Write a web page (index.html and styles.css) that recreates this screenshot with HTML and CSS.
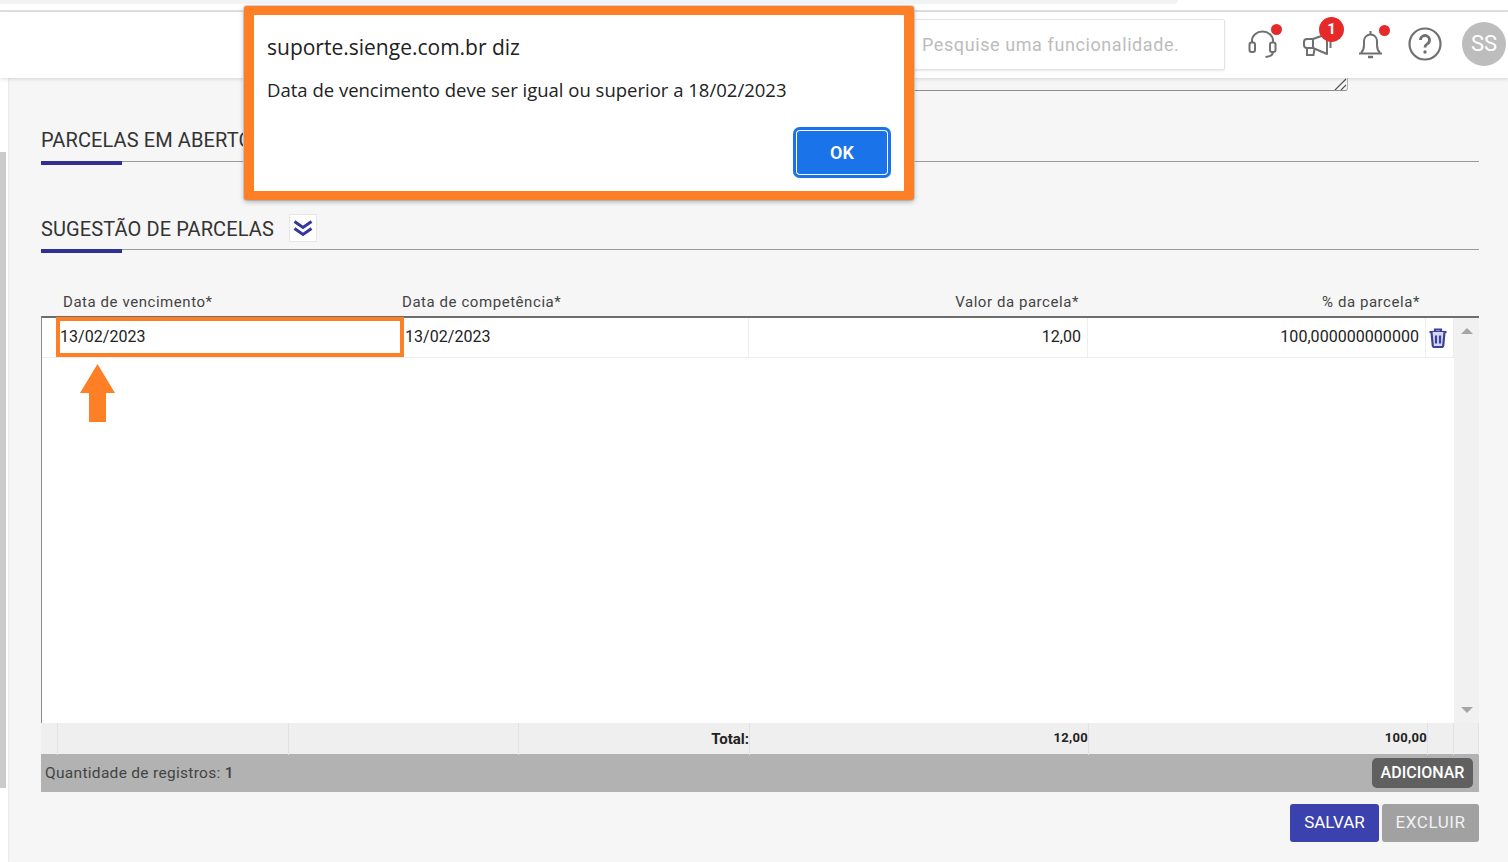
FILE: index.html
```html
<!DOCTYPE html>
<html lang="pt-BR">
<head>
<meta charset="utf-8">
<title>Sienge</title>
<link rel="stylesheet" href="styles.css">
</head>
<body>
<div class="page">
  <div class="topstrip"><div class="tab-edge"></div></div>
  <header class="header">
    <div class="search">Pesquise uma funcionalidade.</div>
    <div class="icons">
      <div class="icon ic-head">
        <svg width="32" height="30" viewBox="0 0 32 30" fill="none" stroke="#707070" stroke-width="2"><path d="M4 12v-1.500a10.500 9 0 0 1 21 0V12"/><rect x="1.500" y="12.500" width="5.500" height="9.500" rx="2"/><rect x="22" y="12.500" width="5.500" height="9.500" rx="2"/><path d="M25 22c0 3-3 4.500-7.500 5"/></svg>
        <span class="dot"></span>
      </div>
      <div class="icon ic-mega">
        <svg width="34" height="28" viewBox="0 0 34 28" fill="none" stroke="#707070" stroke-width="2"><path d="M10 8H4a3 3 0 0 0-3 3v3a3 3 0 0 0 3 3h6z"/><path d="M10 8 24 3v20L10 17" stroke-linejoin="round"/><path d="M4 17v7h6.500l1-6"/><path d="M27.500 9v8"/></svg>
        <span class="badge">1</span>
      </div>
      <div class="icon ic-bell">
        <svg width="26" height="30" viewBox="0 0 26 30" fill="none" stroke="#707070" stroke-width="2"><path d="M2 23c2-2 3-4 3-8v-4a6.500 6.500 0 0 1 13 0v4c0 4 1 6 3 8"/><path d="M0 23.500h23"/><path d="M11.500 1v3.500"/><path d="M9 27h5" stroke-width="2.500"/></svg>
        <span class="dot"></span>
      </div>
      <div class="icon ic-help">
        <svg width="34" height="34" viewBox="0 0 34 34" fill="none" stroke="#707070" stroke-width="2.200"><circle cx="17" cy="17" r="15.500"/><path d="M12.500 13a4.500 4.500 0 1 1 6.800 3.900c-1.600 1-2.300 1.800-2.300 3.600" stroke-width="2.800"/><circle cx="17" cy="25" r="1.700" fill="#707070" stroke="none"/></svg>
      </div>
      <div class="avatar">SS</div>
    </div>
  </header>

  <div class="body">
    <aside class="side"><div class="side-bar"></div></aside>
    <main class="content">
      <div class="textarea-rest"><svg class="grip" width="14" height="12" viewBox="0 0 14 12" stroke="#555" stroke-width="1.200"><path d="M2 12 13 1M8 12l5-5"/></svg></div>

      <div class="sec sec-open"><h2 class="sec-title">PARCELAS EM ABERTO</h2></div>

      <div class="sec sec-sug">
        <h2 class="sec-title">SUGESTÃO DE PARCELAS</h2>
        <button class="chev" type="button"><svg width="20" height="18" viewBox="0 0 20 18" fill="none" stroke="#34399a" stroke-width="3"><path d="M1.500 2.500l8.500 6 8.500-6M1.500 9.500l8.500 6 8.500-6"/></svg></button>
      </div>

      <div class="thead">
        <div class="th th-a">Data de vencimento*</div>
        <div class="th th-b">Data de competência*</div>
        <div class="th th-c">Valor da parcela*</div>
        <div class="th th-d">% da parcela*</div>
      </div>

      <div class="tbody">
        <div class="rows">
          <div class="row">
            <div class="td td-gap"></div>
            <div class="td td-hl">13/02/2023</div>
            <div class="td td-date">13/02/2023</div>
            <div class="td td-num">12,00</div>
            <div class="td td-num">100,000000000000</div>
            <div class="td td-act">
              <svg width="18" height="20" viewBox="0 0 18 20" fill="#d5d7ee" stroke="#3b4199" stroke-width="2.200"><path d="M0.500 4h17" fill="none"/><path d="M6 4V1.500h6V4" fill="none"/><path d="M2.500 4l1.300 14a1.500 1.500 0 0 0 1.500 1h7.400a1.500 1.500 0 0 0 1.500-1L15.500 4"/><path d="M7 7.500v8M11 7.500v8" fill="none"/></svg>
            </div>
          </div>
          <svg class="arrow" width="35" height="58" viewBox="0 0 35 58"><path d="M17.500 0 35 29H26V58H9V29H0z" fill="#ff7f27"/></svg>
        </div>
        <div class="scroll">
          <span class="tri-up"></span>
          <span class="tri-down"></span>
        </div>
      </div>

      <div class="tfoot">
        <div class="tf"></div>
        <div class="tf"></div>
        <div class="tf"></div>
        <div class="tf tf-total">Total:</div>
        <div class="tf tf-sum">12,00</div>
        <div class="tf tf-sum">100,00</div>
        <div class="tf"></div>
        <div class="tf"></div>
      </div>

      <div class="status">
        <span class="count">Quantidade de registros: <b>1</b></span>
        <button class="btn-add" type="button">ADICIONAR</button>
      </div>

      <div class="actions">
        <button class="btn btn-save" type="button">SALVAR</button>
        <button class="btn btn-del" type="button">EXCLUIR</button>
      </div>
    </main>
  </div>

  <div class="dialog">
    <div class="dlg-title">suporte.sienge.com.br diz</div>
    <div class="dlg-msg">Data de vencimento deve ser igual ou superior a 18/02/2023</div>
    <div class="dlg-foot"><button class="dlg-ok" type="button">OK</button></div>
  </div>
</div>
</body>
</html>
```

FILE: styles.css
```css
* { box-sizing: border-box; }
html, body { margin: 0; padding: 0; }
body { font-family: Roboto, "Liberation Sans", sans-serif; color: #333; background: #fff; }
button { font-family: inherit; border: 0; cursor: pointer; }

.page { position: relative; width: 1508px; height: 862px; overflow: hidden; display: flex; flex-direction: column; }

.topstrip { height: 12px; flex: none; background: #fff; border-bottom: 2px solid #e2e2e2; }
.tab-edge { width: 1178px; height: 4px; background: #f1f3f4; border-bottom-right-radius: 8px; }

.header { height: 66px; flex: none; background: #fff; display: flex; align-items: flex-start; justify-content: flex-end; box-shadow: 0 1px 4px rgba(0,0,0,.14); position: relative; z-index: 2; }
.search { width: 400px; height: 51px; margin-top: 7px; padding: 0 0 0 96px; border: 1px solid #e4e4e4; border-radius: 2px; box-shadow: 0 1px 2px rgba(0,0,0,.1); line-height: 49px; font-size: 18px; color: #bcbcbc; letter-spacing: .59px; background: #fff; white-space: nowrap; }
.icons { width: 283px; height: 66px; position: relative; display: flex; align-items: flex-start; }
.icon { position: relative; flex: none; }
.icon svg { display: block; }
.ic-head { margin: 18px 0 0 23px; width: 32px; }
.ic-mega { margin: 19px 0 0 23px; width: 34px; }
.ic-bell { margin: 18px 0 0 22px; width: 26px; }
.ic-help { margin: 15px 0 0 23px; width: 34px; }
.dot { position: absolute; width: 11px; height: 11px; border-radius: 50%; background: #e62a2a; }
.ic-head .dot { left: 23px; top: -6px; }
.ic-bell .dot { left: 20px; top: -5px; }
.badge { position: absolute; left: 16px; top: -14px; width: 25px; height: 25px; border-radius: 50%; background: #e62a2a; color: #fff; font-size: 15px; font-weight: 700; text-align: center; line-height: 25px; }
.avatar { flex: none; width: 44px; height: 44px; margin: 10px 0 0 20px; border-radius: 50%; background: #bdbdbd; color: #fff; font-size: 22px; text-align: center; line-height: 44px; }

.body { flex: 1; display: flex; min-height: 0; }
.side { width: 8px; flex: none; background: #fff; box-shadow: 1px 0 2px rgba(0,0,0,.06); padding-top: 74px; position: relative; z-index: 1; }
.side-bar { width: 6px; height: 636px; background: #cbcbcb; }
.content { flex: 1; min-width: 0; background: #f6f6f6; padding: 0 29px 0 33px; }

.textarea-rest { position: relative; width: 500px; height: 13px; margin-left: 807px; border-bottom: 1px solid #8d8d8d; border-right: 1px solid #b5b5b5; border-bottom-right-radius: 3px; }
.grip { position: absolute; right: 0; bottom: 0; }

.sec { position: relative; border-bottom: 1px solid #9a9a9a; display: flex; align-items: center; }
.sec::after { content: ""; position: absolute; left: 0; bottom: -4px; width: 81px; height: 4px; background: #2e3192; }
.sec-open { height: 71px; padding-top: 28px; }
.sec-sug { height: 88px; margin-top: 0; padding-top: 47px; }
.sec-title { margin: 0; font-size: 20px; font-weight: 400; color: #333; white-space: nowrap; letter-spacing: .1px; }
.chev { width: 28px; height: 28px; margin-left: 15px; margin-top: -2px; padding: 0; background: #fff; border: 1px solid #e6e6e6; display: flex; align-items: center; justify-content: center; }

.thead { display: grid; grid-template-columns: 361px 345px 339px 334px; height: 66px; padding-top: 42px; font-size: 15px; letter-spacing: .56px; color: #444; line-height: 20px; }
.th-a { padding-left: 22px; }
.th-c { text-align: right; padding-right: 7px; }
.th-d { text-align: right; }

.tbody { display: flex; height: 407px; border-top: 2px solid #6e6e6e; border-left: 1px solid #8d8d8d; background: #fff; }
.rows { position: relative; flex: 1; min-width: 0; }
.row { display: grid; grid-template-columns: 14px 348px 345px 339px 338px 28px; height: 40px; border-bottom: 1px solid #eee; font-size: 16px; color: #222; letter-spacing: .04px; }
.td { line-height: 38px; white-space: nowrap; }
.td-hl { border: 4px solid #ff7f27; margin-top: -1px; line-height: 31px; }
.td-date { padding-left: 1px; border-right: 1px solid #eee; }
.td-num { text-align: right; padding-right: 6px; border-right: 1px solid #eee; }
.td-act { display: flex; align-items: flex-start; padding: 10px 0 0 3px; border-right: 1px solid #eee; }
.td-act svg { display: block; }
.arrow { position: absolute; left: 38px; top: 46px; }
.scroll { position: relative; width: 25px; flex: none; background: #f1f1f1; }
.tri-up, .tri-down { position: absolute; left: 7px; width: 0; height: 0; border-left: 6px solid transparent; border-right: 6px solid transparent; }
.tri-up { top: 10px; border-bottom: 6px solid #a6a6a6; }
.tri-down { bottom: 10px; border-top: 6px solid #a6a6a6; }

.tfoot { display: grid; grid-template-columns: 17px 231px 230px 231px 339px 339px 26px 25px; height: 31px; background: #efefef; font-weight: 700; color: #222; }
.tf { border-right: 1px solid #e2e2e2; text-align: right; line-height: 30px; }
.tf-total { font-size: 15px; line-height: 32px; }
.tf-sum { font-size: 13px; letter-spacing: .3px; }

.status { height: 38px; background: #b2b2b2; display: flex; align-items: center; justify-content: space-between; padding: 0 6px 0 4px; }
.count { font-size: 15.500px; color: #444; letter-spacing: .3px; }
.count b { font-weight: 500; }
.btn-add { width: 101px; height: 30px; padding: 0 0 2px; border-radius: 5px; background: #606060; color: #fff; font-size: 16px; font-weight: 500; }

.actions { display: flex; justify-content: flex-end; gap: 3px; margin-top: 12px; }
.btn { height: 38px; border-radius: 3px; color: #fff; font-size: 17px; padding: 0 0 2px; }
.btn-save { width: 89px; background: #3b41ad; }
.btn-del { width: 97px; background: #a1a1a1; color: #f2f2f2; letter-spacing: .55px; }

.dialog { position: absolute; left: 244px; top: 6px; width: 670px; height: 194px; z-index: 5; background: #fff; border-style: solid; border-color: #ff7f27; border-width: 9px 10px; border-radius: 3px; box-shadow: 0 2px 5px rgba(0,0,0,.28), 0 0 0 1px #dcdcdc; padding: 17px 13px 0 13px; font-family: "Open Sans", "Noto Sans", sans-serif; color: #222; }
.dlg-title { font-size: 21px; line-height: 30px; }
.dlg-msg { font-size: 18.500px; line-height: 26px; margin-top: 15px; white-space: nowrap; }
.dlg-foot { display: flex; justify-content: flex-end; margin-top: 24px; }
.dlg-ok { width: 98px; height: 51px; padding: 0; border-radius: 7px; background: #1a73e8; color: #fff; font-size: 18px; font-weight: 600; font-family: Roboto, sans-serif; box-shadow: inset 0 0 0 3px #1a73e8, inset 0 0 0 4px #fff; }
```
